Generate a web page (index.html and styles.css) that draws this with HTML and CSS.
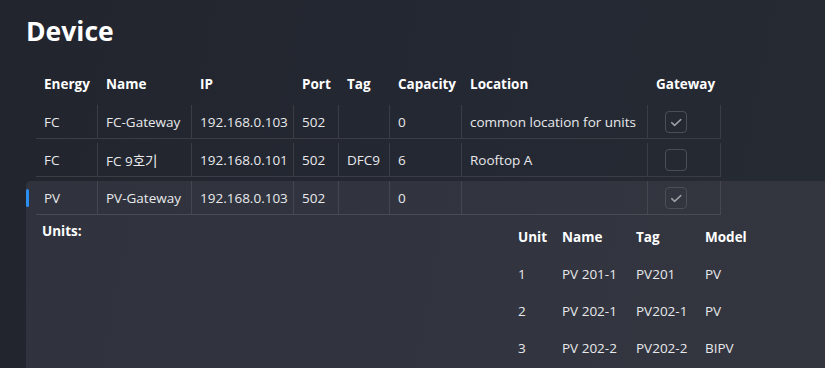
FILE: index.html
```html
<!DOCTYPE html>
<html lang="en">
<head>
<meta charset="utf-8">
<title>Device</title>
<link rel="stylesheet" href="styles.css">
</head>
<body>
<div class="page">
  <h1 class="title">Device</h1>
  <div class="table">
    <div class="row head">
      <div class="cell">Energy</div>
      <div class="cell">Name</div>
      <div class="cell">IP</div>
      <div class="cell">Port</div>
      <div class="cell">Tag</div>
      <div class="cell">Capacity</div>
      <div class="cell">Location</div>
      <div class="cell">Gateway</div>
    </div>
    <div class="row">
      <div class="cell">FC</div>
      <div class="cell">FC-Gateway</div>
      <div class="cell">192.168.0.103</div>
      <div class="cell">502</div>
      <div class="cell"></div>
      <div class="cell">0</div>
      <div class="cell">common location for units</div>
      <div class="cell"><span class="check on"><svg viewBox="0 0 21 21"><path d="M6 11.2 L9 14 L15.5 8"/></svg></span></div>
    </div>
    <div class="row">
      <div class="cell">FC</div>
      <div class="cell">FC 9호기</div>
      <div class="cell">192.168.0.101</div>
      <div class="cell">502</div>
      <div class="cell">DFC9</div>
      <div class="cell">6</div>
      <div class="cell">Rooftop A</div>
      <div class="cell"><span class="check"></span></div>
    </div>
    <div class="selected">
      <span class="indicator"></span>
      <div class="row">
        <div class="cell">PV</div>
        <div class="cell">PV-Gateway</div>
        <div class="cell">192.168.0.103</div>
        <div class="cell">502</div>
        <div class="cell"></div>
        <div class="cell">0</div>
        <div class="cell"></div>
        <div class="cell"><span class="check on"><svg viewBox="0 0 21 21"><path d="M6 11.2 L9 14 L15.5 8"/></svg></span></div>
      </div>
      <div class="details">
        <div class="units-label">Units:</div>
        <div class="units">
          <div class="urow uhead"><span>Unit</span><span>Name</span><span>Tag</span><span>Model</span></div>
          <div class="urow"><span>1</span><span>PV 201-1</span><span>PV201</span><span>PV</span></div>
          <div class="urow"><span>2</span><span>PV 202-1</span><span>PV202-1</span><span>PV</span></div>
          <div class="urow"><span>3</span><span>PV 202-2</span><span>PV202-2</span><span>BIPV</span></div>
        </div>
      </div>
    </div>
  </div>
</div>
</body>
</html>
```

FILE: styles.css
```css
* { box-sizing: border-box; }
html, body {
  margin: 0;
  height: 100%;
}
body {
  background: linear-gradient(100deg, #22252e 0%, #242832 55%, #262a33 100%);
  color: #e8e9ec;
  font-family: "Segoe UI", "Open Sans", "Noto Sans CJK KR", sans-serif;
  font-size: 13.5px;
  overflow: hidden;
}
.page {
  padding: 12px 0 0 0;
}
.title {
  margin: 0 0 0 26px;
  font-size: 26.5px;
  font-weight: 700;
  line-height: 38px;
  color: #ffffff;
  height: 55px;
}
.table {
  display: flex;
  flex-direction: column;
}
.row {
  display: grid;
  grid-template-columns: 62px 94px 102px 45px 51px 72px 186px 73px;
  margin-left: 36px;
  width: 685px;
  border-bottom: 1px solid #3a3d46;
  margin-top: 4px;
}
.row .cell {
  height: 33px;
  border-right: 1px solid #3a3d46;
  padding-left: 8px;
  display: flex;
  align-items: center;
  white-space: nowrap;
}
.row.head {
  border-bottom: none;
  margin-top: 0;
  height: 34px;
}
.row.head .cell {
  border-right: none;
  height: 34px;
  font-weight: 700;
  color: #ffffff;
}
.check {
  width: 22px;
  height: 22px;
  margin-left: 9px;
  border: 1px solid #4b4e57;
  border-radius: 4px;
  display: block;
}
.check svg {
  width: 20px;
  height: 20px;
  display: block;
  fill: none;
  stroke: #9c9ea4;
  stroke-width: 1.6;
  stroke-linecap: round;
  stroke-linejoin: round;
}
.selected {
  position: relative;
  margin-top: 4px;
  margin-left: 26px;
  padding-left: 10px;
  background: linear-gradient(100deg, #30333d 0%, #32353f 60%, #33363f 100%);
  border-top-left-radius: 5px;
  height: 200px;
}
.selected .row {
  margin-left: 0;
  margin-top: 0;
  border-bottom-color: #484b54;
}
.selected .row .cell {
  border-right-color: #444750;
}
.indicator {
  position: absolute;
  left: 0;
  top: 8px;
  width: 3px;
  height: 18px;
  background: #2b8ff2;
  border-radius: 2px;
}
.details {
  display: flex;
  padding-top: 6px;
}
.units-label {
  width: 482px;
  padding-left: 6px;
  font-weight: 700;
  color: #ffffff;
  line-height: 20px;
}
.units {
  display: flex;
  flex-direction: column;
  margin-top: -3px;
}
.urow {
  display: grid;
  grid-template-columns: 44px 74px 69px 60px;
  height: 37px;
  align-items: center;
}
.urow.uhead {
  font-weight: 700;
  color: #ffffff;
}
```
